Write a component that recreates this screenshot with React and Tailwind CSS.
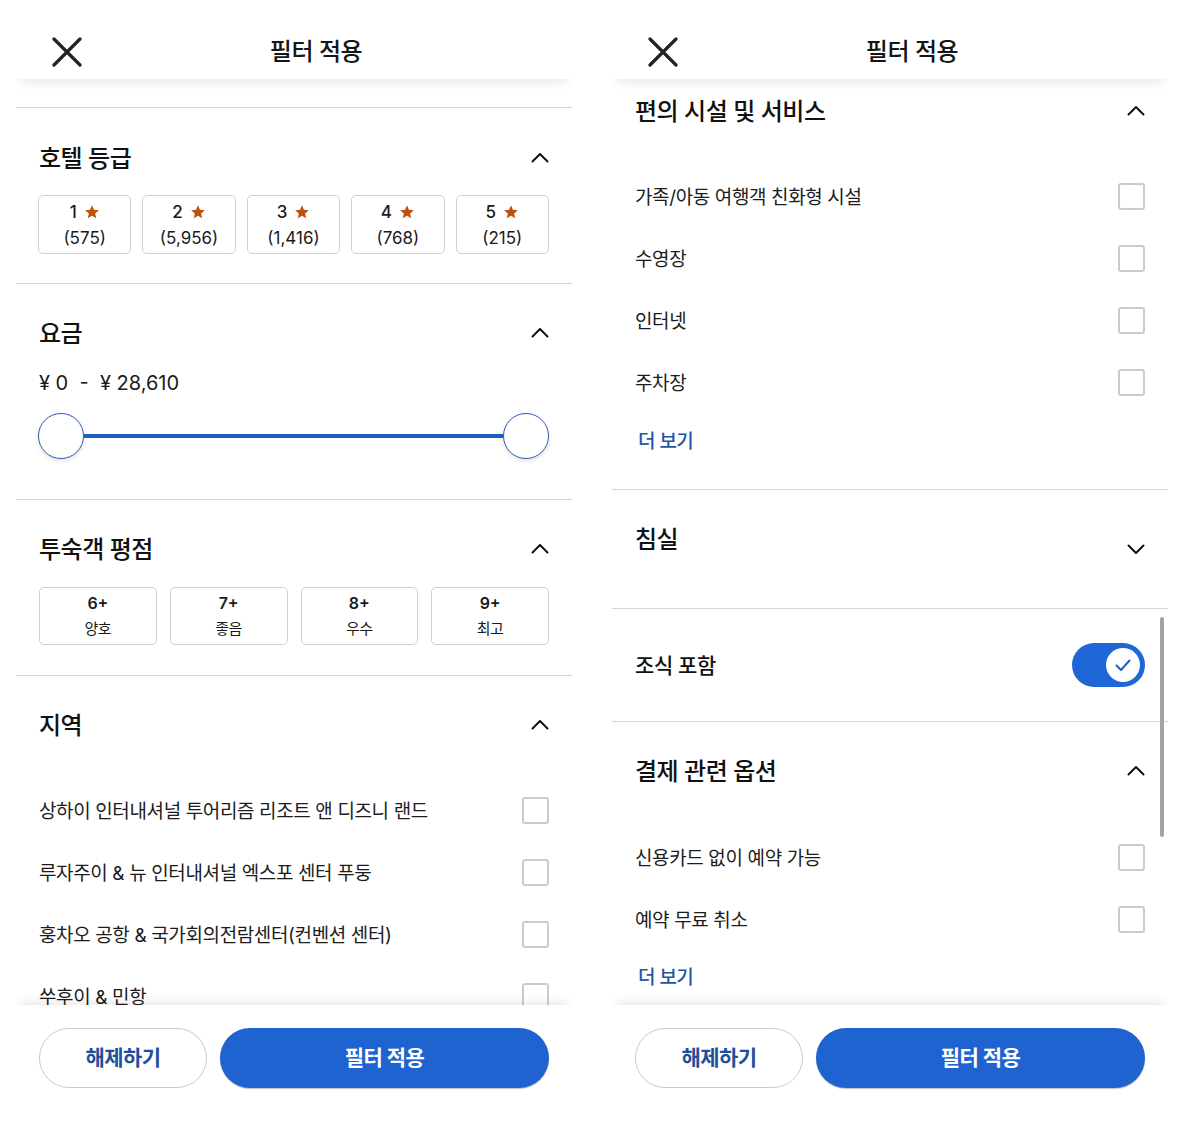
import React from "react";

function XIcon() {
  return (
    <svg width="30" height="30" viewBox="0 0 30 30" fill="none">
      <path d="M2 2 L28 28 M28 2 L2 28" stroke="#222" strokeWidth="3.2" strokeLinecap="round" />
    </svg>
  );
}

function Chevron({ down }) {
  return (
    <svg width="18" height="11" viewBox="0 0 18 11" fill="none">
      {down ? (
        <path d="M1.5 1.5 L9 9 L16.5 1.5" stroke="#111" strokeWidth="2" strokeLinecap="round" strokeLinejoin="round" />
      ) : (
        <path d="M1.5 9.5 L9 2 L16.5 9.5" stroke="#111" strokeWidth="2" strokeLinecap="round" strokeLinejoin="round" />
      )}
    </svg>
  );
}

function Star() {
  return (
    <svg width="16" height="16" viewBox="0 0 24 24">
      <path
        d="M12 1.8 L14.9 8.6 L22.3 9.2 L16.7 14.1 L18.4 21.4 L12 17.5 L5.6 21.4 L7.3 14.1 L1.7 9.2 L9.1 8.6 Z"
        fill="#bd520c"
      />
    </svg>
  );
}

function Checkbox() {
  return <div className="w-[27px] h-[27px] border-2 border-[#cbcbcb] rounded-[3px] bg-white shrink-0" />;
}

function Header() {
  return (
    <div className="relative z-10 h-[79px] shrink-0 bg-white flex items-center pt-[25px] px-[36px] shadow-[0_7px_10px_-4px_rgba(0,0,0,0.1)]">
      <div className="w-[30px] h-[30px] flex items-center justify-center">
        <XIcon />
      </div>
      <div className="flex-1 text-center pl-[14px] text-[24px] leading-[32px] font-medium tracking-[-0.02em] text-[#161616]">
        필터 적용
      </div>
    </div>
  );
}

function Footer() {
  return (
    <div className="relative z-10 h-[129px] shrink-0 bg-white pt-[23px] px-[23px] shadow-[0_-7px_10px_-4px_rgba(0,0,0,0.09)]">
      <div className="flex gap-[13px]">
        <button className="w-[168px] h-[60px] rounded-full border-[1.5px] border-[#c9c9c9] bg-white text-[21px] font-semibold tracking-[-0.03em] text-[#1f4f9c]">
          해제하기
        </button>
        <button className="flex-1 h-[60px] rounded-full bg-[#1f63d1] text-[21px] font-semibold tracking-[-0.03em] text-white shadow-[0_1px_1px_rgba(0,0,0,0.25)]">
          필터 적용
        </button>
      </div>
    </div>
  );
}

function SectionHeading({ title, down }) {
  return (
    <div className="flex items-center justify-between h-[32px]">
      <div className="h-[32px] text-[24px] leading-[32px] pt-[2px] font-medium tracking-[-0.02em] text-[#111]">{title}</div>
      <Chevron down={down} />
    </div>
  );
}

function CheckRow({ label }) {
  return (
    <div className="h-[62px] flex items-center justify-between">
      <span className="text-[19px] pt-[4px] tracking-[-0.02em] text-[#1c1c1c] whitespace-nowrap">{label}</span>
      <Checkbox />
    </div>
  );
}

function MoreLink() {
  return (
    <div className="h-[28px] text-[19px] leading-[28px] pt-[2px] font-medium tracking-[-0.03em] text-[#1e56a8] pl-[3px]">
      더 보기
    </div>
  );
}

function LeftPanel() {
  const stars = [
    ["1", "(575)"],
    ["2", "(5,956)"],
    ["3", "(1,416)"],
    ["4", "(768)"],
    ["5", "(215)"],
  ];
  const ratings = [
    ["6+", "양호"],
    ["7+", "좋음"],
    ["8+", "우수"],
    ["9+", "최고"],
  ];
  const areas = [
    "상하이 인터내셔널 투어리즘 리조트 앤 디즈니 랜드",
    "루자주이 & 뉴 인터내셔널 엑스포 센터 푸둥",
    "훙차오 공항 & 국가회의전람센터(컨벤션 센터)",
    "쑤후이 & 민항",
  ];
  return (
    <div className="w-[556px] h-[1134px] flex flex-col bg-white overflow-hidden">
      <Header />
      <div className="flex-1 min-h-0 overflow-hidden">
        <div className="h-[29px] border-b border-[#d7d7d7]" />
        <div className="px-[23px] pt-[33px] pb-[29px] border-b border-[#d7d7d7]">
          <SectionHeading title="호텔 등급" />
          <div className="mt-[22px] grid grid-cols-5 gap-[11px] -ml-px">
            {stars.map(([n, c]) => (
              <div
                key={n}
                className="h-[59px] rounded-[5px] border-[1.5px] border-[#d0d0d0] flex flex-col items-center justify-center text-[17px] leading-[26px] text-[#1a1a1a]"
              >
                <div className="flex items-center gap-[7px] font-medium">
                  <span>{n}</span>
                  <Star />
                </div>
                <div>{c}</div>
              </div>
            ))}
          </div>
        </div>
        <div className="px-[23px] pt-[32px] pb-[40px] border-b border-[#d7d7d7]">
          <SectionHeading title="요금" />
          <div className="mt-[22px] text-[20px] leading-[26px] text-[#1a1a1a] whitespace-pre">¥ 0  -  ¥ 28,610</div>
          <div className="mt-[17px] h-[46px] flex items-center -ml-px">
            <div className="w-[46px] h-[46px] rounded-full border-[1.5px] border-[#2b5cad] bg-white shadow-[0_2px_4px_rgba(0,0,0,0.12)] shrink-0" />
            <div className="flex-1 h-[4px] bg-[#1f5fc2]" />
            <div className="w-[46px] h-[46px] rounded-full border-[1.5px] border-[#2b5cad] bg-white shadow-[0_2px_4px_rgba(0,0,0,0.12)] shrink-0" />
          </div>
        </div>
        <div className="px-[23px] pt-[32px] pb-[30px] border-b border-[#d7d7d7]">
          <SectionHeading title="투숙객 평점" />
          <div className="mt-[23px] grid grid-cols-4 gap-[13px]">
            {ratings.map(([n, l]) => (
              <div
                key={n}
                className="h-[58px] rounded-[5px] border-[1.5px] border-[#d0d0d0] flex flex-col items-center justify-center leading-[25px] text-[#1a1a1a]"
              >
                <div className="text-[16px] font-semibold">{n}</div>
                <div className="text-[15px] tracking-[-0.03em]">{l}</div>
              </div>
            ))}
          </div>
        </div>
        <div className="px-[23px] pt-[32px]">
          <SectionHeading title="지역" />
          <div className="mt-[39px]">
            {areas.map((a) => (
              <CheckRow key={a} label={a} />
            ))}
          </div>
        </div>
      </div>
      <Footer />
    </div>
  );
}

function Toggle() {
  return (
    <div className="w-[73px] h-[44px] rounded-full bg-[#1f66d6] flex items-center justify-end pr-[5px]">
      <div className="w-[34px] h-[34px] rounded-full bg-white flex items-center justify-center">
        <svg width="20" height="20" viewBox="0 0 20 20" fill="none">
          <path d="M3.5 10.5 L8 15 L16.5 5.5" stroke="#1f5fc2" strokeWidth="2" strokeLinecap="round" strokeLinejoin="round" />
        </svg>
      </div>
    </div>
  );
}

function RightPanel() {
  const amenities = ["가족/아동 여행객 친화형 시설", "수영장", "인터넷", "주차장"];
  const payments = ["신용카드 없이 예약 가능", "예약 무료 취소"];
  return (
    <div className="w-[556px] h-[1134px] flex flex-col bg-white overflow-hidden">
      <Header />
      <div className="relative flex-1 min-h-0 overflow-hidden">
        <div className="px-[23px] pt-[15px] pb-[35px] border-b border-[#d7d7d7]">
          <SectionHeading title="편의 시설 및 서비스" />
          <div className="mt-[39px]">
            {amenities.map((a) => (
              <CheckRow key={a} label={a} />
            ))}
          </div>
          <div className="mt-[13px]">
            <MoreLink />
          </div>
        </div>
        <div className="px-[23px] pt-[32px] pb-[54px] border-b border-[#d7d7d7]">
          <div className="flex items-start justify-between h-[32px]">
            <div className="h-[32px] text-[24px] leading-[32px] pt-[2px] font-medium tracking-[-0.02em] text-[#111]">침실</div>
            <div className="mt-[22px] h-[10px] flex items-center">
              <Chevron down />
            </div>
          </div>
        </div>
        <div className="h-[113px] px-[23px] flex items-center justify-between border-b border-[#d7d7d7]">
          <div className="text-[21px] pt-[2px] font-medium tracking-[-0.02em] text-[#111]">조식 포함</div>
          <Toggle />
        </div>
        <div className="px-[23px] pt-[32px]">
          <SectionHeading title="결제 관련 옵션" />
          <div className="mt-[40px]">
            {payments.map((a) => (
              <CheckRow key={a} label={a} />
            ))}
          </div>
          <div className="mt-[12px]">
            <MoreLink />
          </div>
        </div>
        <div className="absolute right-[4px] top-[538px] w-[4px] h-[220px] rounded-full bg-[#a3a3a3]" />
      </div>
      <Footer />
    </div>
  );
}

export default function App() {
  return (
    <div className="w-[1200px] h-[1134px] bg-white flex gap-[40px] pl-[16px] overflow-hidden font-['Inter','Noto_Sans_CJK_KR',sans-serif]">
      <LeftPanel />
      <RightPanel />
    </div>
  );
}
